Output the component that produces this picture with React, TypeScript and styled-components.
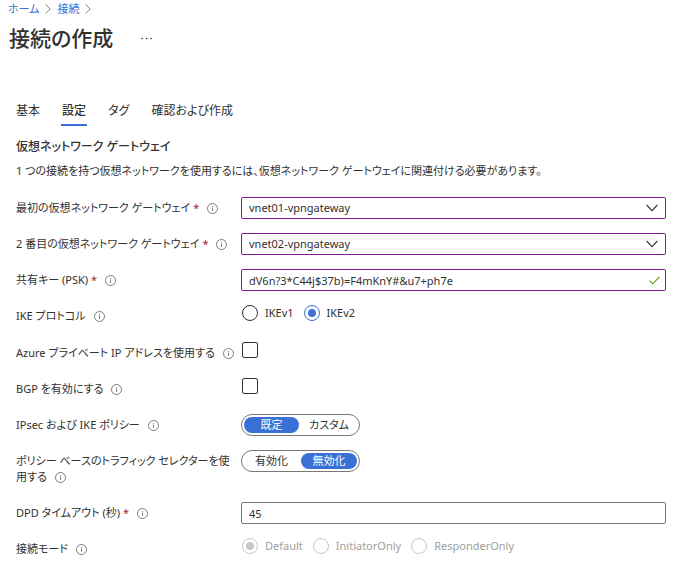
import { useId, useState } from 'react';
import type { ReactNode } from 'react';
import styled, { createGlobalStyle, css } from 'styled-components';

const color = {
  text: '#323130',
  link: '#3b6fd4',
  accent: '#3a6fd6',
  edited: '#881798',
  border: '#7a7876',
  muted: '#605e5c',
  disabled: '#a19f9d',
  disabledLine: '#c8c6c4',
  required: '#a4262c',
  valid: '#57a300',
};

const GlobalStyle = createGlobalStyle`
  *, *::before, *::after { box-sizing: border-box; }
  body {
    margin: 0;
    background: #fff;
    color: ${color.text};
    font-family: 'Noto Sans', 'Noto Sans CJK JP', sans-serif;
    font-size: 11px;
    line-height: 16px;
    font-feature-settings: 'palt';
  }
  button, input, select {
    margin: 0;
    font: inherit;
    font-feature-settings: inherit;
    color: inherit;
  }
`;

const Page = styled.div`
  padding-bottom: 8px;
`;

const Breadcrumb = styled.nav`
  display: flex;
  align-items: center;
  gap: 6px;
  padding: 1px 8px 0;
`;

const CrumbLink = styled.a`
  color: ${color.link};
  text-decoration: none;
`;

const TitleBar = styled.header`
  display: flex;
  align-items: center;
  gap: 24px;
  padding: 5px 9px 0;
`;

const Title = styled.h1`
  margin: 0;
  font-size: 21px;
  line-height: 32px;
  font-weight: 500;
`;

const MoreButton = styled.button`
  display: flex;
  padding: 4px;
  border: 0;
  background: none;
`;

const TabList = styled.div`
  display: flex;
  gap: 20px;
  padding: 48px 15px 0;
`;

const Tab = styled.button<{ $active: boolean }>`
  padding: 0 1px 4px;
  border: 0;
  border-bottom: 2px solid ${(p) => (p.$active ? color.accent : 'transparent')};
  background: none;
  font-size: 12px;
  line-height: 18px;
  font-weight: ${(p) => (p.$active ? 500 : 400)};
`;

const Section = styled.section`
  padding: 12px 15px 0 16px;
`;

const SectionTitle = styled.h2`
  margin: 0;
  font-size: 12px;
  line-height: 18px;
  font-weight: 500;
`;

const SectionText = styled.p`
  margin: 7px 0 18px;
`;

const Form = styled.form`
  display: grid;
  gap: 14px;
`;

const FieldRow = styled.div`
  display: grid;
  grid-template-columns: 221px minmax(0, 1fr);
  column-gap: 4px;
  align-items: start;
  min-height: 22px;
`;

const FieldLabel = styled.label`
  padding: 3px 0;
`;

const Required = styled.span`
  margin-left: 3px;
  color: ${color.required};
`;

const InfoSvg = styled.svg`
  margin-left: 8px;
  vertical-align: -2px;
`;

const ControlBox = styled.div<{ $iconInset: number }>`
  display: grid;
  align-items: center;

  > * {
    grid-area: 1 / 1;
  }

  > svg {
    justify-self: end;
    margin-right: ${(p) => p.$iconInset}px;
    pointer-events: none;
  }
`;

const controlStyle = css<{ $edited?: boolean }>`
  width: 100%;
  height: 22px;
  padding: 0 28px 0 7px;
  border: 1px solid ${(p) => (p.$edited ? color.edited : color.border)};
  border-radius: 2px;
  background: #fff;
  outline: none;
`;

const TextInput = styled.input<{ $edited?: boolean }>`
  ${controlStyle}
`;

const Select = styled.select<{ $edited?: boolean }>`
  ${controlStyle}
  appearance: none;
`;

const RadioGroup = styled.div`
  display: flex;
  align-items: flex-start;
  gap: 10px;
  min-height: 23px;
  padding-left: 1px;
`;

const RadioOption = styled.label<{ $disabled?: boolean }>`
  display: flex;
  align-items: center;
  gap: 7px;
  color: ${(p) => (p.$disabled ? color.disabled : color.text)};
`;

const RadioInput = styled.input`
  appearance: none;
  width: 16px;
  height: 16px;
  padding: 3px;
  border: 1px solid ${color.text};
  border-radius: 50%;

  &:checked {
    border-color: ${color.accent};
    background: ${color.accent} content-box;
  }

  &:disabled {
    border-color: ${color.disabledLine};
  }

  &:disabled:checked {
    background: ${color.disabledLine} content-box;
  }
`;

const Checkbox = styled.input`
  appearance: none;
  width: 16px;
  height: 16px;
  margin-left: 1px;
  border: 1px solid ${color.text};
  border-radius: 2px;

  &:checked {
    background: ${color.accent};
  }
`;

const Toggle = styled.div`
  display: grid;
  grid-template-columns: 55px 56px;
  gap: 2px;
  justify-self: start;
  padding: 2px;
  border: 1px solid ${color.border};
  border-radius: 11px;
`;

const ToggleButton = styled.button`
  height: 16px;
  padding: 0;
  border: 0;
  border-radius: 8px;
  background: none;
  line-height: 16px;

  &[aria-pressed='true'] {
    background: ${color.accent};
    color: #fff;
  }
`;

const CrumbArrow = () => (
  <svg width="6" height="10" viewBox="0 0 6 10" fill="none" stroke="#8a8886" aria-hidden="true">
    <path d="M0.5 0.5 5.2 5 0.5 9.5" />
  </svg>
);

const InfoIcon = () => (
  <InfoSvg width="11" height="11" viewBox="0 0 11 11" fill="none" stroke={color.muted} aria-hidden="true">
    <circle cx="5.5" cy="5.5" r="5" strokeWidth="0.8" />
    <path d="M5.5 4.6V8M5.5 2.9V3.8" strokeWidth="0.8" />
  </InfoSvg>
);

const ChevronIcon = () => (
  <svg width="12" height="8" viewBox="0 0 12 8" fill="none" stroke={color.text} strokeWidth="1.1" aria-hidden="true">
    <path d="M0.6 1 6 6.6 11.4 1" />
  </svg>
);

const CheckIcon = () => (
  <svg width="11" height="9" viewBox="0 0 11 9" fill="none" stroke={color.valid} strokeWidth="1.1" aria-hidden="true">
    <path d="M0.5 4.6 3.7 7.8 10.5 0.9" />
  </svg>
);

interface FieldProps {
  label: string;
  required?: boolean;
  group?: boolean;
  children: (id: string) => ReactNode;
}

function Field({ label, required, group, children }: FieldProps) {
  const id = useId();
  const labelId = `${id}-label`;
  return (
    <FieldRow>
      <FieldLabel
        as={group ? 'div' : 'label'}
        id={labelId}
        htmlFor={group ? undefined : id}
      >
        {label}
        {required && <Required>*</Required>}
        <InfoIcon />
      </FieldLabel>
      {children(group ? labelId : id)}
    </FieldRow>
  );
}

interface ChoiceProps {
  labelId: string;
  options: string[];
  initial: string;
  disabled?: boolean;
}

function Radios({ labelId, options, initial, disabled }: ChoiceProps) {
  const [value, setValue] = useState(initial);
  return (
    <RadioGroup role="radiogroup" aria-labelledby={labelId}>
      {options.map((option) => (
        <RadioOption key={option} $disabled={disabled}>
          <RadioInput
            type="radio"
            name={labelId}
            checked={value === option}
            disabled={disabled}
            onChange={() => setValue(option)}
          />
          {option}
        </RadioOption>
      ))}
    </RadioGroup>
  );
}

function Switcher({ labelId, options, initial }: ChoiceProps) {
  const [value, setValue] = useState(initial);
  return (
    <Toggle role="group" aria-labelledby={labelId}>
      {options.map((option) => (
        <ToggleButton
          key={option}
          type="button"
          aria-pressed={value === option}
          onClick={() => setValue(option)}
        >
          {option}
        </ToggleButton>
      ))}
    </Toggle>
  );
}

function GatewaySelect({ id, initial }: { id: string; initial: string }) {
  const [value, setValue] = useState(initial);
  return (
    <ControlBox $iconInset={8}>
      <Select id={id} $edited value={value} onChange={(e) => setValue(e.target.value)}>
        <option>vnet01-vpngateway</option>
        <option>vnet02-vpngateway</option>
      </Select>
      <ChevronIcon />
    </ControlBox>
  );
}

const tabs = ['基本', '設定', 'タグ', '確認および作成'];

export default function App() {
  const [tab, setTab] = useState('設定');
  return (
    <Page lang="ja">
      <GlobalStyle />
      <Breadcrumb aria-label="階層リンク">
        <CrumbLink href="#home">ホーム</CrumbLink>
        <CrumbArrow />
        <CrumbLink href="#connections">接続</CrumbLink>
        <CrumbArrow />
      </Breadcrumb>
      <TitleBar>
        <Title>接続の作成</Title>
        <MoreButton type="button" aria-label="その他">
          <svg width="11" height="3" viewBox="0 0 11 3" fill={color.text} aria-hidden="true">
            <circle cx="1" cy="1.5" r="0.8" />
            <circle cx="5.5" cy="1.5" r="0.8" />
            <circle cx="10" cy="1.5" r="0.8" />
          </svg>
        </MoreButton>
      </TitleBar>
      <TabList role="tablist">
        {tabs.map((name) => (
          <Tab
            key={name}
            type="button"
            role="tab"
            aria-selected={tab === name}
            $active={tab === name}
            onClick={() => setTab(name)}
          >
            {name}
          </Tab>
        ))}
      </TabList>
      <Section>
        <SectionTitle>仮想ネットワーク ゲートウェイ</SectionTitle>
        <SectionText>
          1 つの接続を持つ仮想ネットワークを使用するには、仮想ネットワーク ゲートウェイに関連付ける必要があります。
        </SectionText>
        <Form onSubmit={(e) => e.preventDefault()}>
          <Field label="最初の仮想ネットワーク ゲートウェイ" required>
            {(id) => <GatewaySelect id={id} initial="vnet01-vpngateway" />}
          </Field>
          <Field label="2 番目の仮想ネットワーク ゲートウェイ" required>
            {(id) => <GatewaySelect id={id} initial="vnet02-vpngateway" />}
          </Field>
          <Field label="共有キー (PSK)" required>
            {(id) => (
              <ControlBox $iconInset={6}>
                <TextInput id={id} $edited type="text" defaultValue="dV6n?3*C44j$37b)=F4mKnY#&u7+ph7e" />
                <CheckIcon />
              </ControlBox>
            )}
          </Field>
          <Field label="IKE プロトコル" group>
            {(id) => <Radios labelId={id} options={['IKEv1', 'IKEv2']} initial="IKEv2" />}
          </Field>
          <Field label="Azure プライベート IP アドレスを使用する">
            {(id) => <Checkbox id={id} type="checkbox" />}
          </Field>
          <Field label="BGP を有効にする">
            {(id) => <Checkbox id={id} type="checkbox" />}
          </Field>
          <Field label="IPsec および IKE ポリシー" group>
            {(id) => <Switcher labelId={id} options={['既定', 'カスタム']} initial="既定" />}
          </Field>
          <Field label="ポリシー ベースのトラフィック セレクターを使用する" group>
            {(id) => <Switcher labelId={id} options={['有効化', '無効化']} initial="無効化" />}
          </Field>
          <Field label="DPD タイムアウト (秒)" required>
            {(id) => <TextInput id={id} type="text" inputMode="numeric" defaultValue="45" />}
          </Field>
          <Field label="接続モード" group>
            {(id) => (
              <Radios
                labelId={id}
                options={['Default', 'InitiatorOnly', 'ResponderOnly']}
                initial="Default"
                disabled
              />
            )}
          </Field>
        </Form>
      </Section>
    </Page>
  );
}
